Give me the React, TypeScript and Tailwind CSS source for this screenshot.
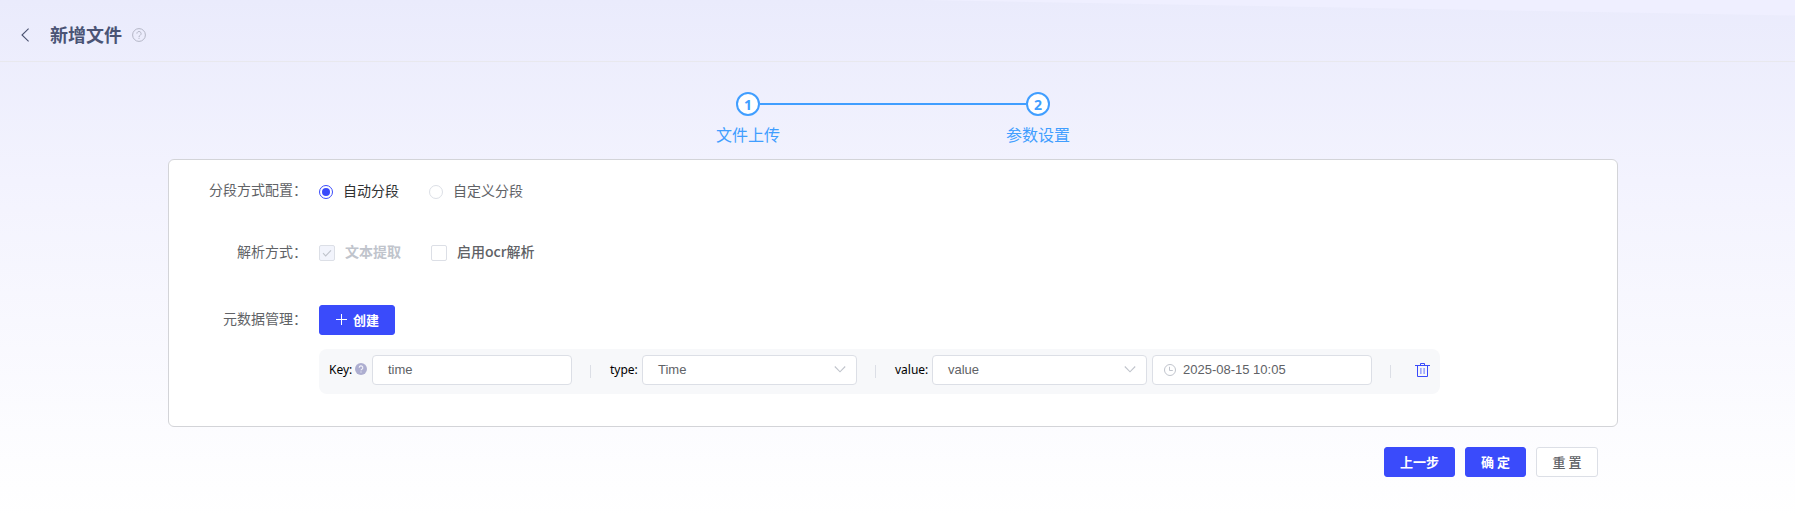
import React from "react";

const CJK = "font-['Noto_Sans_CJK_SC',sans-serif]";
const ARIAL = "font-['Liberation_Sans','Noto_Sans_CJK_SC',sans-serif]";
const FIELD = "font-['Noto_Sans','Noto_Sans_CJK_SC',sans-serif] text-[12px] pb-px";

function Header() {
  return (
    <header className="flex h-[62px] shrink-0 items-center border-b border-[#e8e8ee] pt-[9px] pl-[18px]">
      <svg className="h-4 w-4" viewBox="0 0 16 16" fill="none" stroke="#4a5270" strokeWidth="1.1">
        <path d="M10.600 1.600 4 8l6.600 6.400" />
      </svg>
      <h1 className="-mt-[2px] ml-4 text-[18px] leading-6 font-bold text-[#4a5475]">新增文件</h1>
      <svg className="ml-[10px] h-[14px] w-[14px]" viewBox="0 0 14 14" fill="none" stroke="#b4b6c6" strokeWidth="1">
        <circle cx="7" cy="7" r="6.400" />
        <path d="M4.900 5.600a2.100 2.100 0 1 1 3.300 1.700C7.400 7.800 7 8.100 7 9" />
        <path d="M7 9.800v1.100" />
      </svg>
    </header>
  );
}

function Step({ n, title }: { n: number; title: string }) {
  return (
    <div className="flex w-16 flex-col items-center">
      <span className="flex h-6 w-6 items-center justify-center rounded-full border-2 border-[#409eff] bg-white pt-[2px] font-['Noto_Sans',sans-serif] text-[14px] leading-none font-bold text-[#409eff]">
        {n}
      </span>
      <span className="mt-[6px] text-[16px] leading-6 whitespace-nowrap text-[#409eff]">{title}</span>
    </div>
  );
}

function Steps() {
  return (
    <div className="flex h-[97px] justify-center pt-[30px] pr-[9px]">
      <Step n={1} title="文件上传" />
      <div className="-mx-5 mt-[11px] h-[2px] w-[266px] bg-[#409eff]" />
      <Step n={2} title="参数设置" />
    </div>
  );
}

function Label({ children }: { children: React.ReactNode }) {
  return <div className="w-[138px] shrink-0 text-right text-[14px] leading-5 text-[#606266]">{children}</div>;
}

function Divider() {
  return <span className="mt-[3px] h-[13px] w-px bg-[#dcdfe6]" />;
}

function Chevron() {
  return (
    <svg className="h-3 w-3 shrink-0" viewBox="0 0 12 12" fill="none" stroke="#c0c4cc" strokeWidth="1.1">
      <path d="M.8 2.500 6 7.800 11.200 2.500" />
    </svg>
  );
}

function Select({ value }: { value: string }) {
  return (
    <div className="flex h-[30px] w-[215px] items-center justify-between rounded-[4px] border border-[#dcdfe6] bg-white pr-[10px] pb-px pl-[15px]">
      <span className={`text-[13px] text-[#606266] ${ARIAL}`}>{value}</span>
      <Chevron />
    </div>
  );
}

function Button({ primary, className, children }: { primary?: boolean; className: string; children: React.ReactNode }) {
  const tone = primary
    ? "border-[#3a4bfb] bg-[#3a4bfb] text-white font-bold"
    : "border-[#dcdfe6] bg-white text-[#606266] font-medium";
  return (
    <button
      type="button"
      className={`flex h-[30px] items-center justify-center rounded-[3px] border pb-[2px] text-[13px] leading-none whitespace-nowrap ${tone} ${className}`}
    >
      {children}
    </button>
  );
}

function MetadataRow() {
  return (
    <div className="mt-[14px] ml-[150px] flex h-[45px] w-[1121px] items-center rounded-[8px] bg-[#f7f8fa] pb-[3px] pl-[10px] text-black">
      <span className={`w-[26px] ${FIELD}`}>Key:</span>
      <svg className="-mt-[2px] h-3 w-3" viewBox="0 0 12 12">
        <circle cx="6" cy="6" r="6" fill="#adaed0" />
        <path d="M4.200 4.700a1.800 1.800 0 1 1 2.700 1.500c-.6.4-.9.6-.9 1.100M6 8.500v1" fill="none" stroke="#f2f2f9" strokeWidth="1.100" />
      </svg>
      <div className="ml-[5px] flex h-[30px] w-[200px] items-center rounded-[4px] border border-[#dcdfe6] bg-white pb-px pl-[15px]">
        <span className={`text-[13px] text-[#606266] ${ARIAL}`}>time</span>
      </div>
      <span className="w-[18px]" />
      <Divider />
      <span className={`ml-[19px] w-[32px] ${FIELD}`}>type:</span>
      <Select value="Time" />
      <span className="w-[18px]" />
      <Divider />
      <span className={`ml-[19px] w-[37px] ${FIELD}`}>value:</span>
      <Select value="value" />
      <div className="ml-[5px] flex h-[30px] w-[220px] items-center rounded-[4px] border border-[#dcdfe6] bg-white pb-px pl-[11px]">
        <svg className="h-[12px] w-[12px]" viewBox="0 0 12 12" fill="none" stroke="#c0c4cc" strokeWidth="1">
          <circle cx="6" cy="6" r="5.500" />
          <path d="M5.500 2.800v3.700h3.300" />
        </svg>
        <span className={`ml-[7px] text-[13px] text-[#606266] ${ARIAL}`}>2025-08-15 10:05</span>
      </div>
      <span className="w-[18px]" />
      <Divider />
      <svg className="-mt-[2px] ml-6 h-[15px] w-[15px]" viewBox="0 0 15 15" fill="none" stroke="#3a4bfb" strokeWidth="1">
        <path d="M0 3.500h15M5.500 3V1.500h4V3M2.500 4v10.500h10V4" />
        <path d="M5.900 6v6M9.100 6v6" opacity=".75" />
      </svg>
    </div>
  );
}

export default function App() {
  return (
    <div className={`relative flex h-[516px] w-full flex-col overflow-hidden bg-linear-to-b from-[#eaebfc] via-[#f3f3fe] via-35% to-white ${CJK}`}>
      <svg className="absolute top-0 right-0 h-4 w-[875px]" viewBox="0 0 875 16" preserveAspectRatio="none">
        <path d="M0 0H875V15.500Z" fill="#efefff" />
      </svg>
      <Header />
      <Steps />
      <main className="ml-[168px] w-[1450px]">
        <section className="h-[268px] rounded-[6px] border border-[#d3d4d8] bg-white">
          <div className="flex pt-[19px]">
            <Label>分段方式配置：</Label>
            <label className="mt-[3px] ml-3 flex h-5 items-center text-[14px] text-[#303133]">
              <span className="mr-[10px] flex h-[14px] w-[14px] items-center justify-center rounded-full border border-[#3a4bfb]">
                <span className="h-2 w-2 rounded-full bg-[#3a4bfb]" />
              </span>
              <span className="-mt-[4px]">自动分段</span>
            </label>
            <label className="mt-[3px] ml-[30px] flex h-5 items-center text-[14px] text-[#606266]">
              <span className="mr-[10px] h-[14px] w-[14px] rounded-full border border-[#dcdfe6]" />
              <span className="-mt-[4px]">自定义分段</span>
            </label>
          </div>
          <div className="mt-[39px] flex">
            <Label>解析方式：</Label>
            <label className="ml-3 flex h-5 items-center text-[14px] font-bold text-[#c0c4cc]">
              <svg className="mt-[4px] mr-[10px] h-4 w-4" viewBox="0 0 16 16" fill="none">
                <rect x=".5" y=".5" width="15" height="15" rx="1.500" fill="#f2f4fc" stroke="#dcdfe6" />
                <path d="m4 8.200 2.700 2.700L12 5.300" stroke="#c0c4cc" strokeWidth="1.100" />
              </svg>
              文本提取
            </label>
            <label className="ml-[30px] flex h-5 items-center text-[14px] font-medium text-[#606266]">
              <span className="mt-[4px] mr-[10px] h-4 w-4 rounded-[2px] border border-[#dcdfe6] bg-white" />
              启用ocr解析
            </label>
          </div>
          <div className="mt-[44px] flex">
            <div className="pt-[3px]">
              <Label>元数据管理：</Label>
            </div>
            <Button primary className="ml-3 w-[76px]">
              <svg className="mt-px mr-[5px] h-[13px] w-[13px]" viewBox="0 0 13 13" stroke="#fff" strokeWidth="1">
                <path d="M1 6.500h11M6.500 1v11" />
              </svg>
              创建
            </Button>
          </div>
          <MetadataRow />
        </section>
        <footer className="mt-5 flex justify-end gap-[10px] pr-5">
          <Button primary className="w-[71px]">上一步</Button>
          <Button primary className="w-[61px]">确 定</Button>
          <Button className="w-[62px]">重 置</Button>
        </footer>
      </main>
    </div>
  );
}
